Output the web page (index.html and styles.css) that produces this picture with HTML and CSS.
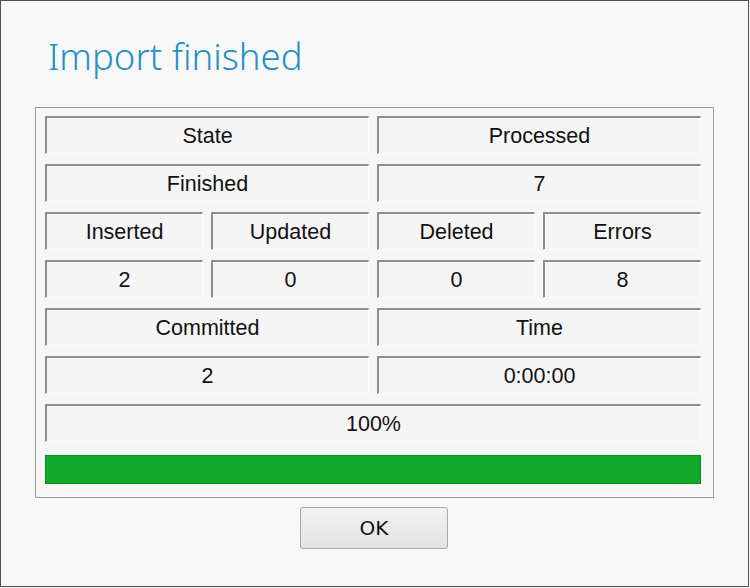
FILE: index.html
```html
<!DOCTYPE html>
<html>
<head>
<meta charset="utf-8">
<link rel="stylesheet" href="styles.css">
</head>
<body>
<div class="window">
  <h1 class="title">Import finished</h1>
  <div class="panel">
    <div class="grid">
      <div class="cell span2">State</div>
      <div class="cell span2">Processed</div>
      <div class="cell span2">Finished</div>
      <div class="cell span2">7</div>
      <div class="cell">Inserted</div>
      <div class="cell">Updated</div>
      <div class="cell">Deleted</div>
      <div class="cell">Errors</div>
      <div class="cell">2</div>
      <div class="cell">0</div>
      <div class="cell">0</div>
      <div class="cell">8</div>
      <div class="cell span2">Committed</div>
      <div class="cell span2">Time</div>
      <div class="cell span2">2</div>
      <div class="cell span2">0:00:00</div>
      <div class="cell span4">100%</div>
    </div>
    <div class="progress"><div class="fill" style="width:100%"></div></div>
  </div>
  <div class="actions">
    <button class="ok">OK</button>
  </div>
</div>
</body>
</html>
```

FILE: styles.css
```css
html, body {
  margin: 0;
  padding: 0;
  background: #f7f7f7;
}
.window {
  box-sizing: border-box;
  width: 749px;
  height: 587px;
  border: 1px solid #505050;
  background: #f8f8f8;
  font-family: "Liberation Sans", Arial, sans-serif;
  color: #111;
}
.title {
  margin: 0;
  padding: 35px 0 0 47px;
  height: 73px;
  box-sizing: border-box;
  font-family: "Noto Sans", "Open Sans", sans-serif;
  font-weight: 300;
  font-size: 36.5px;
  line-height: 40px;
  color: #2590c6;
  letter-spacing: 0;
}
.panel {
  box-sizing: border-box;
  margin: 33px 0 0 34px;
  width: 679px;
  height: 391px;
  border: 1px solid #9a9a9a;
  background: #f6f6f6;
  padding: 8px 12px 0 9px;
}
.grid {
  display: grid;
  grid-template-columns: repeat(4, 1fr);
  column-gap: 8px;
  row-gap: 10px;
}
.cell {
  box-sizing: border-box;
  height: 38px;
  border-top: 2px solid #8e8e8e;
  border-left: 2px solid #8e8e8e;
  border-right: 1px solid #fcfcfc;
  border-bottom: 1px solid #fcfcfc;
  background: #f5f5f5;
  text-align: center;
  font-size: 21.5px;
  line-height: 36px;
}
.span2 { grid-column: span 2; }
.span4 { grid-column: span 4; }
.progress {
  margin-top: 13px;
  height: 29px;
  box-sizing: border-box;
  border: 1px solid #0b8d22;
  background: #f5f5f5;
}
.fill {
  height: 100%;
  background: #12a92b;
}
.actions {
  display: flex;
  justify-content: center;
  padding-top: 9px;
}
.ok {
  width: 148px;
  height: 42px;
  margin-left: -1px;
  border: 1px solid #a9a9a9;
  border-radius: 3px;
  background: linear-gradient(#f2f2f2, #e2e2e2);
  font-family: "DejaVu Sans", sans-serif;
  font-size: 20px;
  color: #111;
  padding: 0;
}
```
